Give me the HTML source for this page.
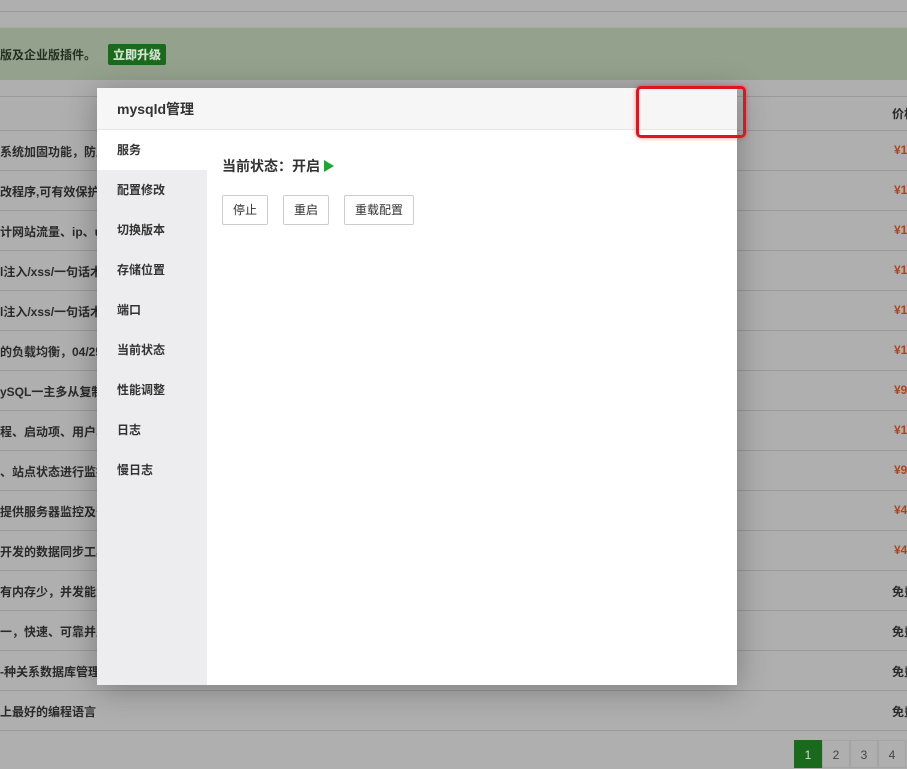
<!DOCTYPE html>
<html><head><meta charset="utf-8"><style>
*{margin:0;padding:0;box-sizing:border-box}
body{width:907px;height:757px;overflow:hidden;background:#afafaf;font-family:"Liberation Sans","Noto Sans CJK SC",sans-serif;font-size:12px;color:#333;position:relative;font-weight:bold}
.ln{position:absolute;left:0;width:907px;height:1px;background:#9a9a9a}
.banner{position:absolute;left:0;top:27px;width:907px;height:53px;background:#94a28d;border-top:1px solid #a4ad9f}
.banner span{position:absolute;left:0;top:18px;color:#24301f}
.banner b{position:absolute;left:108px;top:16px;background:#1a6a1d;color:#cfe0cc;padding:2px 5px;border-radius:2px;font-size:12px}
.lt{position:absolute;left:0;color:#2a2a2a;white-space:nowrap;width:97px;overflow:hidden}
.pr{position:absolute;left:894px;color:#b0451a;width:13px;overflow:hidden;white-space:nowrap}
.fr{position:absolute;left:892px;color:#2a2a2a;width:15px;overflow:hidden;white-space:nowrap}
.modal{position:absolute;left:97px;top:88px;width:640px;height:597px;background:#fff;box-shadow:0 4px 30px rgba(0,0,0,.3)}
.hd{height:42px;background:#f6f6f6;border-bottom:1px solid #e6e6e6;padding-left:20px;line-height:42px;font-size:14px;color:#333}
.side{position:absolute;left:0;top:42px;width:110px;bottom:0;background:#ededef}
.side div{height:40px;line-height:40px;padding-left:20px;color:#333}
.side div.on{background:#fff}
.st{position:absolute;left:125px;top:68px;font-size:14px}
.st i{display:inline-block;width:0;height:0;border-left:10px solid #20a53a;border-top:6px solid transparent;border-bottom:6px solid transparent;vertical-align:-1px;margin-left:4px}
.btn{position:absolute;top:107px;height:30px;border:1px solid #ccc;border-radius:2px;line-height:28px;text-align:center;background:#fff;font-weight:normal;color:#333}
.red{position:absolute;left:636px;top:86px;width:110px;height:52px;border:3px solid #e0141c;border-radius:5px;box-shadow:0 0 4px rgba(224,20,28,.5)}
.pg{position:absolute;top:740px;height:28px;width:28px;text-align:center;line-height:28px;border:1px solid #a3a3a3;color:#444;font-weight:normal}
</style></head><body>
<div class="ln" style="top:11px"></div>
<div class="banner"><span>版及企业版插件。</span><b>立即升级</b></div>
<div class="ln" style="top:96px"></div>
<div class="fr" style="top:105px">价格</div>
<div class="ln" style="top:130px"></div>
<div class="lt" style="top:143px">系统加固功能，防止</div><div class="pr" style="top:143px">¥1</div>
<div class="ln" style="top:170px"></div>
<div class="lt" style="top:183px">改程序,可有效保护</div><div class="pr" style="top:183px">¥1</div>
<div class="ln" style="top:210px"></div>
<div class="lt" style="top:223px">计网站流量、ip、u</div><div class="pr" style="top:223px">¥1</div>
<div class="ln" style="top:250px"></div>
<div class="lt" style="top:263px">l注入/xss/一句话木</div><div class="pr" style="top:263px">¥1</div>
<div class="ln" style="top:290px"></div>
<div class="lt" style="top:303px">l注入/xss/一句话木</div><div class="pr" style="top:303px">¥1</div>
<div class="ln" style="top:330px"></div>
<div class="lt" style="top:343px">的负载均衡，04/25</div><div class="pr" style="top:343px">¥1</div>
<div class="ln" style="top:370px"></div>
<div class="lt" style="top:383px">ySQL一主多从复制</div><div class="pr" style="top:383px">¥9</div>
<div class="ln" style="top:410px"></div>
<div class="lt" style="top:423px">程、启动项、用户、</div><div class="pr" style="top:423px">¥1</div>
<div class="ln" style="top:450px"></div>
<div class="lt" style="top:463px">、站点状态进行监控</div><div class="pr" style="top:463px">¥9</div>
<div class="ln" style="top:490px"></div>
<div class="lt" style="top:503px">提供服务器监控及安</div><div class="pr" style="top:503px">¥4</div>
<div class="ln" style="top:530px"></div>
<div class="lt" style="top:543px">开发的数据同步工具</div><div class="pr" style="top:543px">¥4</div>
<div class="ln" style="top:570px"></div>
<div class="lt" style="top:583px">有内存少，并发能力</div><div class="fr" style="top:583px">免费</div>
<div class="ln" style="top:610px"></div>
<div class="lt" style="top:623px">一，快速、可靠并且</div><div class="fr" style="top:623px">免费</div>
<div class="ln" style="top:650px"></div>
<div class="lt" style="top:663px">-种关系数据库管理</div><div class="fr" style="top:663px">免费</div>
<div class="ln" style="top:690px"></div>
<div class="lt" style="top:703px">上最好的编程语言</div><div class="fr" style="top:703px">免费</div>
<div class="ln" style="top:730px"></div>
<div class="pg" style="left:794px;background:#1a6a1d;color:#cfe0cc;border-color:#1a6a1d">1</div>
<div class="pg" style="left:822px">2</div>
<div class="pg" style="left:850px">3</div>
<div class="pg" style="left:878px">4</div>
<div class="modal">
<div class="hd">mysqld管理</div>
<div class="side"><div class="on">服务</div><div>配置修改</div><div>切换版本</div><div>存储位置</div><div>端口</div><div>当前状态</div><div>性能调整</div><div>日志</div><div>慢日志</div></div>
<div class="st">当前状态：开启<i></i></div>
<div class="btn" style="left:125px;width:46px">停止</div>
<div class="btn" style="left:186px;width:46px">重启</div>
<div class="btn" style="left:247px;width:70px">重载配置</div>
</div>
<div class="red"></div>
</body></html>
